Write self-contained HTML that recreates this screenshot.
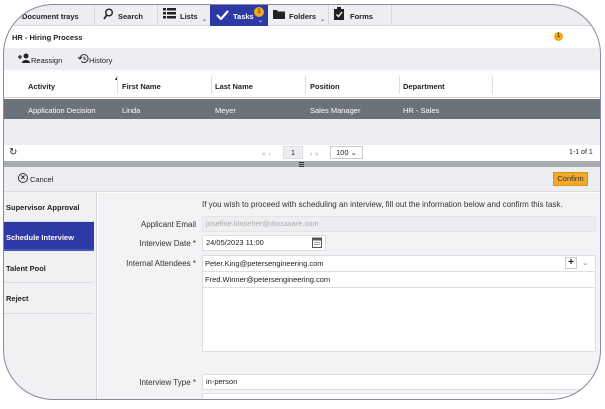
<!DOCTYPE html>
<html><head><meta charset="utf-8"><style>
*{margin:0;padding:0;box-sizing:border-box}
body{width:605px;height:406px;overflow:hidden;background:#fff;font-family:"Liberation Sans",sans-serif;font-size:7.5px;color:#222;position:relative}
.a{position:absolute}
.b{font-weight:bold}
.inp{position:absolute;background:#fff;border:1px solid #dcdee2;height:16px;line-height:14px;padding-left:3px;font-size:7.5px}
.lbl{position:absolute;width:100px;text-align:right;left:96px;font-size:8px;color:#333}
.sep{position:absolute;top:4px;width:1px;height:21px;background:#d6d8db}
</style></head><body>
<!-- top nav -->
<div class="a" style="left:0;top:0;width:605px;height:26px;background:#eceef1;border-bottom:1px solid #d8dadd"></div>
<div class="a b" style="left:22px;top:12px">Document trays</div>
<div class="sep" style="left:94px"></div>
<svg class="a" style="left:103px;top:8px" width="11" height="12" viewBox="0 0 11 12"><circle cx="6" cy="4.5" r="3.3" fill="none" stroke="#222" stroke-width="1.4"/><line x1="3.8" y1="7" x2="1" y2="11" stroke="#222" stroke-width="1.6"/></svg>
<div class="a b" style="left:118px;top:12px">Search</div>
<div class="sep" style="left:157px"></div>
<svg class="a" style="left:163px;top:8px" width="13" height="11"><rect x="0" y="0" width="3" height="2.5" fill="#222"/><rect x="4" y="0" width="9" height="2.5" fill="#222"/><rect x="0" y="4" width="3" height="2.5" fill="#222"/><rect x="4" y="4" width="9" height="2.5" fill="#222"/><rect x="0" y="8" width="3" height="2.5" fill="#222"/><rect x="4" y="8" width="9" height="2.5" fill="#222"/></svg>
<div class="a b" style="left:180px;top:12px">Lists</div>
<div class="a" style="left:202px;top:16px;font-size:6px">&#8964;</div>
<div class="a" style="left:210px;top:5px;width:58px;height:21px;background:#2d3aa6"></div>
<svg class="a" style="left:216px;top:10px" width="13" height="10"><polyline points="1,5 5,9 12,1" fill="none" stroke="#fff" stroke-width="2.2"/></svg>
<div class="a b" style="left:233px;top:12px;color:#fff">Tasks</div>
<div class="a" style="left:254px;top:7px;width:10px;height:10px;border-radius:50%;background:#f0a81c;font-size:6px;text-align:center;line-height:10px">1</div>
<div class="a" style="left:258px;top:17px;color:#fff;font-size:6px">&#8964;</div>
<svg class="a" style="left:273px;top:10px" width="12" height="9"><path d="M0 0h4l1 1.5h7V9H0z" fill="#222"/></svg>
<div class="a b" style="left:289px;top:12px">Folders</div>
<div class="a" style="left:320px;top:16px;font-size:6px">&#8964;</div>
<div class="sep" style="left:328px"></div>
<svg class="a" style="left:334px;top:7px" width="10" height="13"><rect x="0" y="2" width="10" height="11" fill="#222"/><rect x="3" y="0" width="4" height="3" fill="#222"/><polyline points="2.5,7.5 4.5,9.5 8,5" fill="none" stroke="#fff" stroke-width="1.3"/></svg>
<div class="a b" style="left:350px;top:12px">Forms</div>
<div class="sep" style="left:391px"></div>
<!-- title -->
<div class="a" style="left:0;top:26px;width:605px;height:22px;background:#fff"></div>
<div class="a b" style="left:12px;top:33px">HR - Hiring Process</div>
<div class="a" style="left:554px;top:32px;width:9px;height:9px;border-radius:50%;background:#f0a81c;font-size:6px;text-align:center;line-height:9px">1</div>
<!-- toolbar -->
<div class="a" style="left:0;top:48px;width:605px;height:22px;background:#eceef1"></div>
<svg class="a" style="left:18px;top:53px" width="13" height="10"><path d="M0 4h4M2 2v4" stroke="#222" stroke-width="1.3"/><circle cx="8" cy="3" r="2.5" fill="#222"/><path d="M4 10c0-4 8-4 8 0z" fill="#222"/></svg>
<div class="a" style="left:31px;top:56px">Reassign</div>
<svg class="a" style="left:78px;top:53px" width="11" height="11"><path d="M2 5.5a4 4 0 1 1 1.2 2.9" fill="none" stroke="#333" stroke-width="1"/><path d="M0 4l2 2 2-2" fill="none" stroke="#333" stroke-width="1"/><path d="M6 3.5v2.5h2" fill="none" stroke="#333" stroke-width="1"/></svg>
<div class="a" style="left:89px;top:56px">History</div>
<!-- table header -->
<div class="a" style="left:0;top:70px;width:605px;height:28px;background:#fff;border-bottom:1px solid #ccc"></div>
<div class="a b" style="left:28px;top:82px">Activity</div>
<div class="a" style="left:114px;top:76px;font-size:5px">&#9650;</div>
<div class="a b" style="left:122px;top:82px">First Name</div>
<div class="a b" style="left:215px;top:82px">Last Name</div>
<div class="a b" style="left:310px;top:82px">Position</div>
<div class="a b" style="left:403px;top:82px">Department</div>
<div class="a" style="left:117px;top:76px;width:1px;height:18px;background:#ddd"></div>
<div class="a" style="left:211px;top:76px;width:1px;height:18px;background:#ddd"></div>
<div class="a" style="left:305px;top:76px;width:1px;height:18px;background:#ddd"></div>
<div class="a" style="left:399px;top:76px;width:1px;height:18px;background:#ddd"></div>
<div class="a" style="left:492px;top:76px;width:1px;height:18px;background:#ddd"></div>
<!-- row -->
<div class="a" style="left:0;top:99px;width:605px;height:20px;background:#6c7279"></div>
<div class="a" style="left:28px;top:106px;color:#fff">Application Decision</div>
<div class="a" style="left:122px;top:106px;color:#fff">Linda</div>
<div class="a" style="left:215px;top:106px;color:#fff">Meyer</div>
<div class="a" style="left:310px;top:106px;color:#fff">Sales Manager</div>
<div class="a" style="left:403px;top:106px;color:#fff">HR - Sales</div>
<div class="a" style="left:0;top:119px;width:605px;height:26px;background:#eceef1"></div>
<!-- pager -->
<div class="a" style="left:0;top:145px;width:605px;height:16px;background:#fff"></div>
<div class="a" style="left:9px;top:147px;font-size:10px">&#8635;</div>
<div class="a" style="left:262px;top:149px;color:#aaa">&#171; &#8249;</div>
<div class="a" style="left:283px;top:146px;width:20px;height:13px;background:#eceef1;border:1px solid #ddd;text-align:center;line-height:11px">1</div>
<div class="a" style="left:310px;top:149px;color:#aaa">&#8250; &#187;</div>
<div class="a" style="left:330px;top:146px;width:33px;height:13px;border:1px solid #ccc;line-height:11px;padding-left:5px">100 &#8964;</div>
<div class="a" style="left:569px;top:149px;font-size:7px">1-1 of 1</div>
<div class="a" style="left:0;top:161px;width:605px;height:6px;background:#a8abaf"></div>
<div class="a" style="left:299px;top:162px;width:5px;height:1px;background:#333;box-shadow:0 2px 0 #333,0 4px 0 #333"></div>
<!-- cancel bar -->
<div class="a" style="left:0;top:167px;width:605px;height:25px;background:#eceef1;border-bottom:1px solid #dcdde0"></div>
<div class="a b" style="left:18px;top:173px;width:10px;height:10px;border:1.3px solid #333;border-radius:50%;font-size:8px;text-align:center;line-height:7px">&#215;</div>
<div class="a" style="left:30px;top:175px">Cancel</div>
<div class="a" style="left:553px;top:172px;width:35px;height:14px;background:#f0aa28;border:1px solid #d8951a;text-align:center;line-height:12px;font-size:7.5px;color:#333">Confirm</div>
<!-- sidebar -->
<div class="a" style="left:0;top:192px;width:97px;height:214px;background:#f0f1f3;border-right:1px solid #d6d8db"></div>
<div class="a b" style="left:6px;top:203px">Supervisor Approval</div>
<div class="a" style="left:3px;top:221px;width:91px;height:1px;background:#dcdde0"></div>
<div class="a" style="left:3px;top:222px;width:91px;height:29px;background:#2d3aa6;border-bottom:2px solid #4456c0"></div>
<div class="a b" style="left:6px;top:233px;color:#fff">Schedule Interview</div>
<div class="a b" style="left:6px;top:264px">Talent Pool</div>
<div class="a" style="left:3px;top:282px;width:91px;height:1px;background:#dcdde0"></div>
<div class="a b" style="left:6px;top:294px">Reject</div>
<div class="a" style="left:3px;top:313px;width:91px;height:1px;background:#dcdde0"></div>
<!-- form -->
<div class="a" style="left:98px;top:193px;width:507px;height:213px;background:#f2f3f5"></div>
<div class="a" style="left:202px;top:200px;font-size:8px;color:#333">If you wish to proceed with scheduling an interview, fill out the information below and confirm this task.</div>
<div class="lbl" style="top:220px">Applicant Email</div>
<div class="inp" style="left:202px;top:216px;width:394px;background:#eceef0;color:#aaa;border-color:#e4e5e8">josefine.kinseher@docuware.com</div>
<div class="lbl" style="top:239px">Interview Date *</div>
<div class="inp" style="left:202px;top:235px;width:124px">24/05/2023 11:00</div>
<svg class="a" style="left:312px;top:237px" width="10" height="11"><rect x="0.5" y="1" width="9" height="9.5" fill="#fff" stroke="#555"/><rect x="0.5" y="1" width="9" height="2.5" fill="#555"/><path d="M2 5.5h6M2 7.5h6" stroke="#888" stroke-width=".8"/></svg>
<div class="lbl" style="top:259px">Internal Attendees *</div>
<div class="a" style="left:202px;top:255px;width:394px;height:97px;background:#fff;border:1px solid #dcdee2"></div>
<div class="a" style="left:202px;top:271px;width:394px;height:1px;background:#dcdee2"></div>
<div class="a" style="left:202px;top:287px;width:394px;height:1px;background:#dcdee2"></div>
<div class="a" style="left:205px;top:259px">Peter.King@petersengineering.com</div>
<div class="a" style="left:205px;top:275px">Fred.Winner@petersengineering.com</div>
<div class="a b" style="left:565px;top:257px;width:12px;height:12px;border:1px solid #ccc;background:#fff;text-align:center;line-height:10px;font-size:10px">+</div>
<div class="a" style="left:582px;top:258px;color:#888">&#8964;</div>
<div class="lbl" style="top:378px">Interview Type *</div>
<div class="inp" style="left:202px;top:374px;width:400px">in-person</div>
<div class="inp" style="left:202px;top:393px;width:400px"></div>
<!-- frame -->
<div class="a" style="left:3px;top:4px;width:598px;height:396px;border:1.5px solid #8b88a6;border-radius:50px;box-shadow:0 0 0 80px #fff"></div>
</body></html>
